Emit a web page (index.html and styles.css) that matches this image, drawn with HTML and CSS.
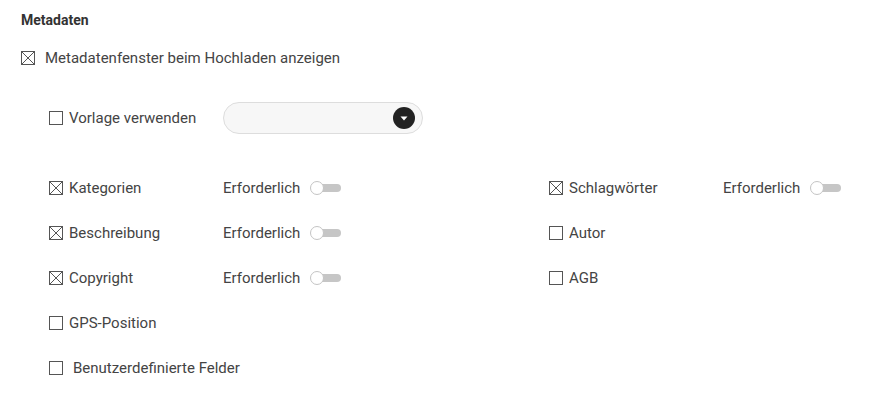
FILE: index.html
```html
<!DOCTYPE html>
<html lang="de">
<head>
<meta charset="utf-8">
<link rel="stylesheet" href="styles.css">
</head>
<body>
<section class="meta">
  <h2 class="title">Metadaten</h2>
  <label class="check-row main">
    <span class="cb checked"></span>
    <span>Metadatenfenster beim Hochladen anzeigen</span>
  </label>
  <div class="inner">
    <div class="template-row">
      <label class="check-row tpl-label">
        <span class="cb"></span>
        <span>Vorlage verwenden</span>
      </label>
      <div class="select">
        <span class="select-btn"><svg width="8" height="5" viewBox="0 0 8 5"><path d="M0.5 0.5h7L4 4.5z" fill="#fff"/></svg></span>
      </div>
    </div>
    <div class="grid">
      <label class="check-row"><span class="cb checked"></span><span>Kategorien</span></label>
      <div class="req"><span>Erforderlich</span><span class="toggle"></span></div>
      <label class="check-row"><span class="cb checked"></span><span>Schlagwörter</span></label>
      <div class="req"><span>Erforderlich</span><span class="toggle"></span></div>

      <label class="check-row"><span class="cb checked"></span><span>Beschreibung</span></label>
      <div class="req"><span>Erforderlich</span><span class="toggle"></span></div>
      <label class="check-row"><span class="cb"></span><span>Autor</span></label>
      <div></div>

      <label class="check-row"><span class="cb checked"></span><span>Copyright</span></label>
      <div class="req"><span>Erforderlich</span><span class="toggle"></span></div>
      <label class="check-row"><span class="cb"></span><span>AGB</span></label>
      <div></div>

      <label class="check-row"><span class="cb"></span><span>GPS-Position</span></label>
      <div></div><div></div><div></div>

      <label class="check-row wide"><span class="cb"></span><span class="spaced">Benutzerdefinierte Felder</span></label>
    </div>
  </div>
</section>
</body>
</html>
```
FILE: styles.css
```css
* { box-sizing: border-box; }
html, body { margin: 0; background: #fff; }
body {
  font-family: Roboto, "Noto Sans", Arial, sans-serif;
  color: #444;
  font-size: 15px;
}
.meta { padding: 12px 0 0 21px; }
.title {
  margin: 0;
  font-size: 14px;
  font-weight: 700;
  color: #333;
  line-height: 16px;
}
.check-row {
  display: flex;
  align-items: center;
  gap: 6px;
  line-height: 20px;
  white-space: nowrap;
}
.main { margin-top: 20px; gap: 10px; }
.cb {
  width: 14px;
  height: 14px;
  border: 1px solid #555;
  flex: 0 0 auto;
  position: relative;
  background: #fff;
}
.cb.checked {
  background:
    linear-gradient(to top right, transparent calc(50% - 0.6px), #555 calc(50% - 0.6px), #555 calc(50% + 0.6px), transparent calc(50% + 0.6px)),
    linear-gradient(to bottom right, transparent calc(50% - 0.6px), #555 calc(50% - 0.6px), #555 calc(50% + 0.6px), transparent calc(50% + 0.6px));
}
.inner { padding-left: 28px; }
.template-row {
  display: flex;
  align-items: center;
  margin-top: 34px;
}
.tpl-label { width: 174px; }
.select {
  width: 200px;
  height: 32px;
  border: 1px solid #ddd;
  border-radius: 16px;
  background: #f7f7f7;
  display: flex;
  align-items: center;
  justify-content: flex-end;
  padding-right: 7px;
}
.select-btn {
  width: 22px;
  height: 22px;
  border-radius: 50%;
  background: #222;
  display: flex;
  align-items: center;
  justify-content: center;
}
.grid {
  display: grid;
  grid-template-columns: 174px 326px 174px auto;
  grid-auto-rows: 45px;
  align-items: center;
  margin-top: 31px;
}
.wide { grid-column: 1 / 3; }
.spaced { margin-left: 4px; }
.req {
  display: flex;
  align-items: center;
  gap: 10px;
}
.toggle {
  position: relative;
  width: 31px;
  height: 14px;
  display: inline-block;
}
.toggle::before {
  content: "";
  position: absolute;
  left: 6px;
  right: 0;
  top: 3px;
  height: 8px;
  border-radius: 4px;
  background: #c6c6c6;
}
.toggle::after {
  content: "";
  position: absolute;
  left: 0;
  top: 0;
  width: 14px;
  height: 14px;
  border-radius: 50%;
  background: #fff;
  border: 1px solid #c4c4c4;
  box-sizing: border-box;
}
```
